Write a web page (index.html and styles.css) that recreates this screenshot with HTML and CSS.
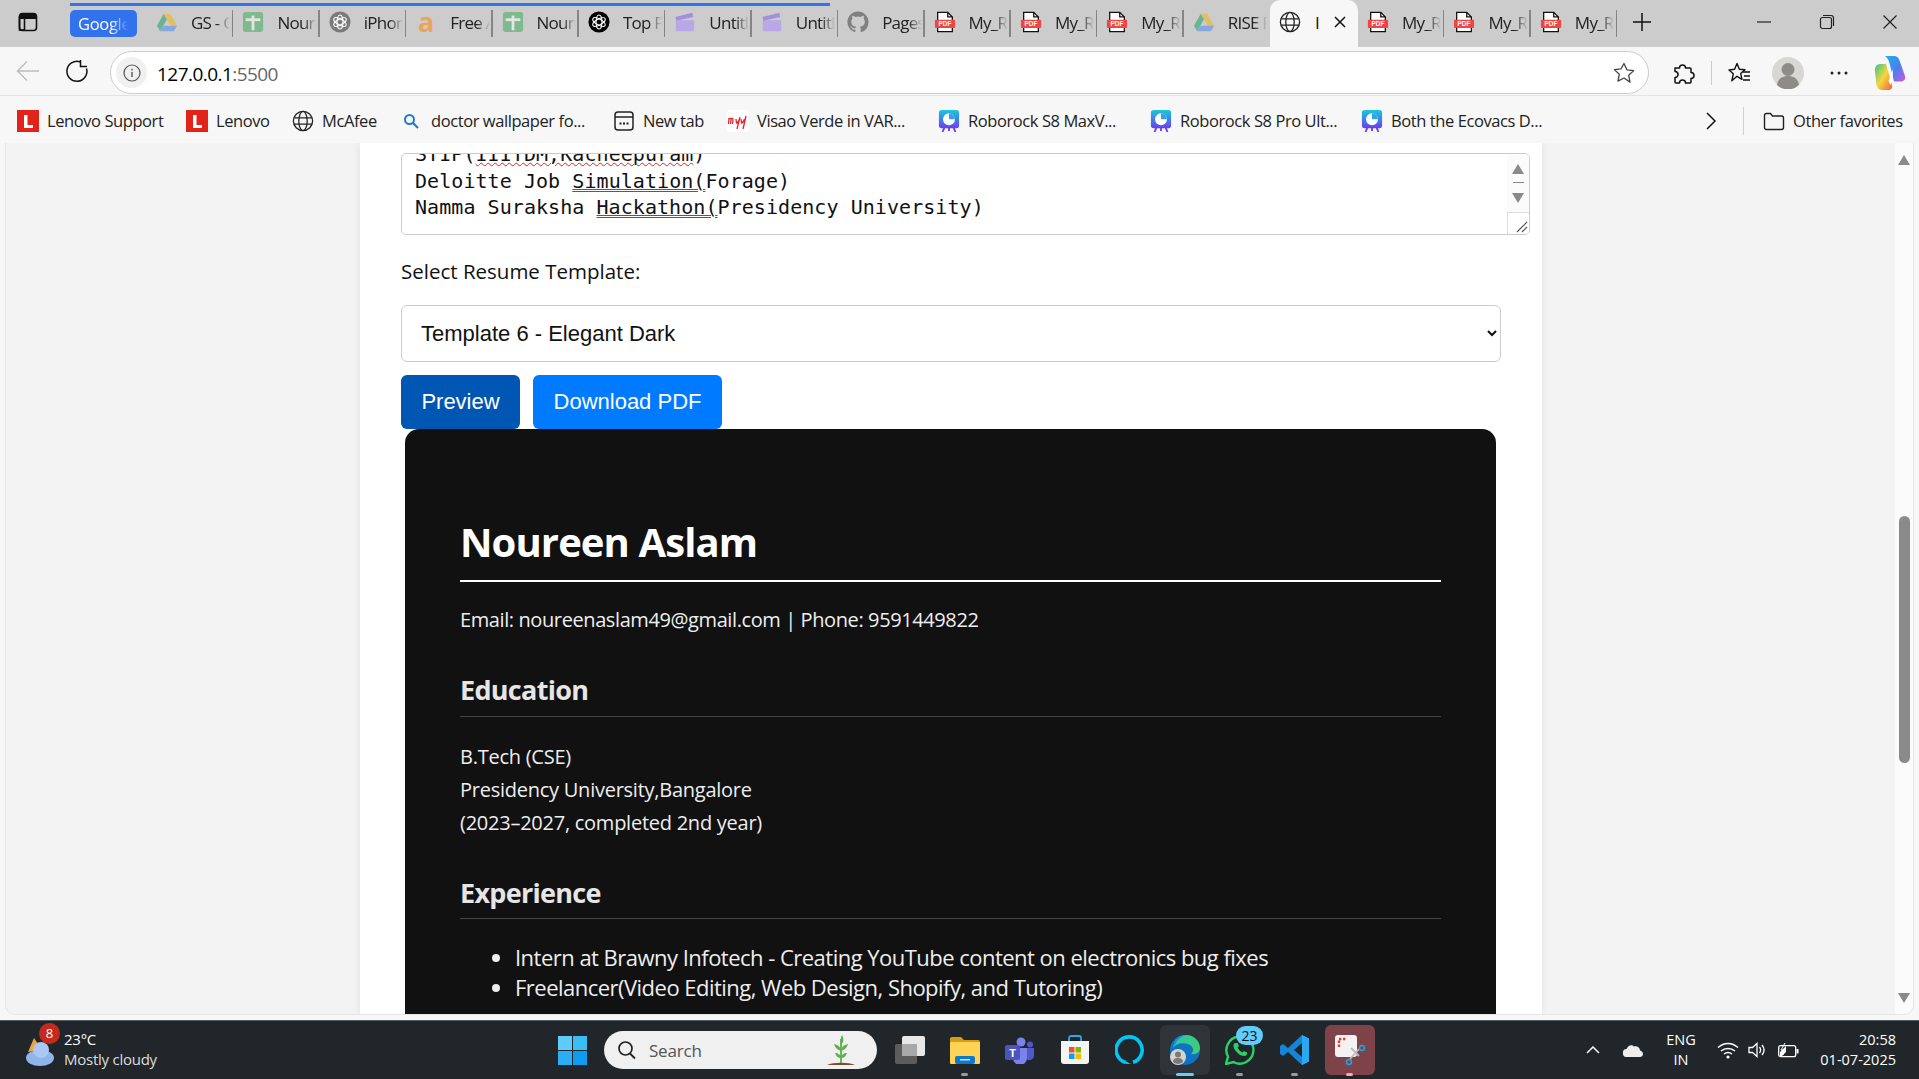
FILE: index.html
```html
<!DOCTYPE html>
<html>
<head>
<title>Resume Builder</title>
<link rel="stylesheet" href="styles.css">
</head>
<body>

<svg class="sprite" width="0" height="0">
<symbol id="i-drive" viewBox="0 0 24 24"><path fill="#0f9d58" d="M8.5 3 1 16l3.5 6 7.5-13z"/><path fill="#f5b400" d="M8.5 3h7L23 16h-7z"/><path fill="#4285f4" d="M4.5 22 8 16h15l-3.5 6z"/></symbol>
<symbol id="i-sheet" viewBox="0 0 24 24"><rect x="1" y="1" width="22" height="22" rx="3" fill="#34a853"/><rect x="10.5" y="5" width="3" height="16" fill="#fff"/><rect x="4" y="8" width="16" height="3" fill="#fff"/></symbol>
<symbol id="i-gpt" viewBox="0 0 24 24"><circle cx="12" cy="12" r="11.5" fill="currentColor"/><g fill="none" stroke="#fff" stroke-width="1.2"><ellipse cx="12" cy="12" rx="3.2" ry="7.6"/><ellipse cx="12" cy="12" rx="3.2" ry="7.6" transform="rotate(60 12 12)"/><ellipse cx="12" cy="12" rx="3.2" ry="7.6" transform="rotate(120 12 12)"/></g></symbol>
<symbol id="i-clap" viewBox="0 0 24 24"><path fill="#b9a7e8" d="M2 10h20v11a1 1 0 0 1-1 1H3a1 1 0 0 1-1-1z"/><path fill="#a48fdc" d="M1.5 6.5 20 2l1 4.5L2.5 10.5z"/></symbol>
<symbol id="i-pdf" viewBox="0 0 24 24"><path fill="#fff" stroke="#111" stroke-width="1.4" d="M4 1.5h11l5 5v16H4z"/><path fill="none" stroke="#111" stroke-width="1.4" d="M15 1.5v5h5"/><rect x="1" y="9.5" width="22" height="9" rx="1" fill="#f04545"/><text x="12" y="16.6" text-anchor="middle" class="pdf-text">PDF</text></symbol>
<symbol id="i-globe" viewBox="0 0 24 24"><g fill="none" stroke="#222" stroke-width="1.4"><circle cx="12" cy="12" r="10.5"/><ellipse cx="12" cy="12" rx="4.6" ry="10.5"/><path d="M2.2 8.5h19.6M2.2 15.5h19.6"/></g></symbol>
<symbol id="i-lenovo" viewBox="0 0 22 22"><rect width="22" height="22" fill="#e2231a"/><path fill="#fff" d="M7 5h3.5v10H16v3H7z"/></symbol>
<symbol id="i-robo" viewBox="0 0 24 24"><defs><linearGradient id="rb" x1="0" y1="0" x2="0" y2="1"><stop offset="0" stop-color="#19c8dc"/><stop offset="1" stop-color="#6a3df0"/></linearGradient></defs><rect x="1" y="0" width="22" height="20" rx="3" fill="url(#rb)"/><path d="M7 19l-2 5M17 19l2 5M12 19v4" stroke="#6a3df0" stroke-width="2"/><circle cx="12" cy="10" r="6.5" fill="#fff"/><path d="M12 10V3.5a6.5 6.5 0 0 1 6.5 6.5z" fill="#2ea6e6"/></symbol>
</svg>

<div class="tabbar">
  <div class="side-btn">
    <svg width="20" height="20" viewBox="0 0 20 20"><rect x="1.5" y="1.5" width="17" height="17" rx="3" fill="none" stroke="#111" stroke-width="1.6"/><path d="M1.5 5a3 3 0 0 1 3-3.5h11a3 3 0 0 1 3 3.5v2h-17z" fill="#111"/><rect x="1.5" y="5" width="5" height="13" fill="none" stroke="#111" stroke-width="1.6"/></svg>
  </div>
  <div class="group-chip"><span>Google</span></div>
  <div class="tab"><svg class="tab-icon dim"><use href="#i-drive"/></svg><span class="tab-text">GS - Goo</span></div>
  <div class="tab"><svg class="tab-icon dim"><use href="#i-sheet"/></svg><span class="tab-text">Nouree</span></div>
  <div class="tab tab-gpt"><svg class="tab-icon grey"><use href="#i-gpt"/></svg><span class="tab-text">iPhone</span></div>
  <div class="tab"><span class="tab-a">a</span><span class="tab-text">Free AI</span></div>
  <div class="tab"><svg class="tab-icon dim"><use href="#i-sheet"/></svg><span class="tab-text">Nouree</span></div>
  <div class="tab"><svg class="tab-icon black"><use href="#i-gpt"/></svg><span class="tab-text">Top Pic</span></div>
  <div class="tab"><svg class="tab-icon"><use href="#i-clap"/></svg><span class="tab-text">Untitled</span></div>
  <div class="tab"><svg class="tab-icon"><use href="#i-clap"/></svg><span class="tab-text">Untitled</span></div>
  <div class="tab"><svg class="tab-icon" viewBox="0 0 24 24"><path fill="#808080" d="M12 .5C5.65.5.5 5.65.5 12c0 5.08 3.29 9.39 7.86 10.91.57.1.78-.25.78-.55v-1.93c-3.2.7-3.87-1.54-3.87-1.54-.52-1.33-1.28-1.68-1.28-1.68-1.05-.72.08-.7.08-.7 1.16.08 1.77 1.19 1.77 1.19 1.03 1.76 2.7 1.25 3.36.96.1-.75.4-1.25.73-1.54-2.56-.29-5.25-1.28-5.25-5.69 0-1.26.45-2.28 1.19-3.09-.12-.29-.52-1.47.11-3.05 0 0 .97-.31 3.17 1.18a11 11 0 0 1 5.78 0c2.2-1.49 3.17-1.18 3.17-1.18.63 1.58.23 2.76.11 3.05.74.81 1.19 1.83 1.19 3.09 0 4.42-2.69 5.4-5.26 5.68.41.36.78 1.06.78 2.14v3.17c0 .31.21.66.79.55A11.5 11.5 0 0 0 23.5 12C23.5 5.65 18.35.5 12 .5z"/></svg><span class="tab-text">Pages</span></div>
  <div class="tab"><svg class="tab-icon"><use href="#i-pdf"/></svg><span class="tab-text">My_Res</span></div>
  <div class="tab"><svg class="tab-icon"><use href="#i-pdf"/></svg><span class="tab-text">My_Res</span></div>
  <div class="tab"><svg class="tab-icon"><use href="#i-pdf"/></svg><span class="tab-text">My_Res</span></div>
  <div class="tab tab-last"><svg class="tab-icon dim"><use href="#i-drive"/></svg><span class="tab-text">RISE Pr</span></div>
  <div class="tab-active">
    <svg class="tab-icon"><use href="#i-globe"/></svg><span class="active-text">I</span>
    <svg class="tab-x" width="14" height="14" viewBox="0 0 14 14"><path d="M2 2l10 10M12 2 2 12" stroke="#111" stroke-width="1.5"/></svg>
  </div>
  <div class="tab tab-next"><svg class="tab-icon"><use href="#i-pdf"/></svg><span class="tab-text">My_Res</span></div>
  <div class="tab"><svg class="tab-icon"><use href="#i-pdf"/></svg><span class="tab-text">My_Res</span></div>
  <div class="tab"><svg class="tab-icon"><use href="#i-pdf"/></svg><span class="tab-text">My_Res</span></div>
  <div class="new-tab"><svg width="20" height="20" viewBox="0 0 20 20"><path d="M10 1v18M1 10h18" stroke="#111" stroke-width="1.5"/></svg></div>
  <div class="win-controls">
    <svg width="16" height="16" viewBox="0 0 16 16"><path d="M1 8h14" stroke="#222" stroke-width="1.2"/></svg>
    <svg width="16" height="16" viewBox="0 0 16 16"><rect x="1.5" y="3.5" width="11" height="11" rx="2" fill="none" stroke="#222" stroke-width="1.2"/><path d="M4 1.5h8a2.5 2.5 0 0 1 2.5 2.5v8" fill="none" stroke="#222" stroke-width="1.2"/></svg>
    <svg width="16" height="16" viewBox="0 0 16 16"><path d="M1.5 1.5l13 13M14.5 1.5l-13 13" stroke="#222" stroke-width="1.2"/></svg>
  </div>
</div>

<div class="toolbar">
  <div class="nav-btn nav-back"><svg width="24" height="22" viewBox="0 0 24 22"><path d="M23 11H2M11 1.5 1.5 11l9.5 9.5" fill="none" stroke="#bdbdbd" stroke-width="1.5"/></svg></div>
  <div class="nav-btn nav-reload"><svg width="24" height="24" viewBox="0 0 24 24"><path d="M15 2.800A10 10 0 1 0 21.500 9.500M15.500 1v6.500H22" fill="none" stroke="#111" stroke-width="1.5"/></svg></div>
  <div class="address">
    <div class="site-info"><svg width="18" height="18" viewBox="0 0 18 18"><circle cx="9" cy="9" r="8" fill="none" stroke="#555" stroke-width="1.2"/><path d="M9 8v5M9 4.800v1.600" stroke="#555" stroke-width="1.4"/></svg></div>
    <span class="url">127.0.0.1<span class="url-port">:5500</span></span>
    <svg class="star" width="24" height="24" viewBox="0 0 24 24"><path d="M12 2.500l2.900 6.300 6.800.8-5 4.700 1.300 6.800L12 17l-6 3.100 1.300-6.800-5-4.700 6.800-.8z" fill="none" stroke="#444" stroke-width="1.3" stroke-linejoin="round"/></svg>
  </div>
  <div class="tool-icons">
    <svg class="t-ext" width="24" height="24" viewBox="0 0 24 24"><path d="M4 7h4.500a3 3 0 1 1 6 0H19a1 1 0 0 1 1 1v3.500a3 3 0 1 1 0 6V21a1 1 0 0 1-1 1h-4.500a3 3 0 1 0-6 0H5a1 1 0 0 1-1-1v-4.500a3 3 0 1 0 0-6z" fill="none" stroke="#111" stroke-width="1.5" stroke-linejoin="round"/></svg>
    <span class="t-sep"></span>
    <svg class="t-fav" width="24" height="24" viewBox="0 0 24 24"><path d="M10 2.500l2.400 5.800 5.600.5-4.300 3.800 1.300 5.700-5-3-5.200 4.500 1.500-7L2 9l5.600-.7z" fill="none" stroke="#111" stroke-width="1.4" stroke-linejoin="round"/><path d="M16 11h7M17 15h6M16 19h7" stroke="#111" stroke-width="1.3"/></svg>
    <span class="avatar"><svg width="32" height="32" viewBox="0 0 32 32"><circle cx="16" cy="16" r="16" fill="#d8d7d3"/><circle cx="16" cy="12.500" r="6.500" fill="#8e8c88"/><path d="M5 28c1-7 6-9 11-9s10 2 11 9a16 16 0 0 1-22 0z" fill="#8e8c88"/></svg></span>
    <svg class="t-dots" width="20" height="6" viewBox="0 0 20 6"><circle cx="3" cy="3" r="1.5" fill="#222"/><circle cx="10" cy="3" r="1.5" fill="#222"/><circle cx="17" cy="3" r="1.5" fill="#222"/></svg>
    <svg class="t-copilot" width="32" height="36" viewBox="0 0 32 36"><defs><linearGradient id="cp1" x1="0" y1="0" x2="1" y2="1"><stop offset="0" stop-color="#18b4e8"/><stop offset=".55" stop-color="#4f7cf0"/><stop offset="1" stop-color="#c85cdc"/></linearGradient><linearGradient id="cp2" x1="0" y1="0" x2="1" y2="1"><stop offset="0" stop-color="#35c48a"/><stop offset=".5" stop-color="#f6d63c"/><stop offset="1" stop-color="#f0603c"/></linearGradient></defs><path d="M11 1h9c3 0 4.500 1.500 5.500 4.500L31 21c1 3-1 5.500-4 5.500h-7L16 10c-1-4-2-7-5-9z" fill="url(#cp1)"/><path d="M6 9h6l6 21c.8 3-1 5-4 5H9c-4 0-5.500-2-6.500-5L1 17c-.5-4 1-8 5-8z" fill="url(#cp2)"/><path d="M14.500 26 19 14l-.5 12-2 4z" fill="#fff"/></svg>
  </div>
</div>

<div class="bookmarks">
  <div class="bm"><svg class="bm-icon"><use href="#i-lenovo"/></svg>Lenovo Support</div>
  <div class="bm"><svg class="bm-icon"><use href="#i-lenovo"/></svg>Lenovo</div>
  <div class="bm"><svg class="bm-icon"><use href="#i-globe"/></svg>McAfee</div>
  <div class="bm bm-search"><svg class="bm-mag" viewBox="0 0 16 16"><circle cx="6.500" cy="6.500" r="4.500" fill="none" stroke="#1f7ad0" stroke-width="2"/><path d="M10 10l5 5" stroke="#1f7ad0" stroke-width="2.2"/></svg>doctor wallpaper fo...</div>
  <div class="bm"><svg class="bm-icon" viewBox="0 0 22 22"><rect x="2" y="2" width="18" height="18" rx="3" fill="none" stroke="#222" stroke-width="1.5"/><path d="M2 7h18" stroke="#222" stroke-width="1.5"/><path d="M6.500 13.500h2M10 13.500h2M13.500 13.500h2" stroke="#222" stroke-width="1.8"/></svg>New tab</div>
  <div class="bm"><svg class="bm-icon" viewBox="0 0 22 22"><rect width="22" height="22" rx="3" fill="#fff"/><path d="M2 8l-.5 6M2 9c1-1 2-1 2 1l-.5 4M4 9c1-1 2-1 2 1l-.5 4M9 9l.5 4c1 0 2-1 3-4M13 7l-3 12M14 9l.5 4c1 0 2-1 3-4M19 6l-3 13" fill="none" stroke="#e8212b" stroke-width="1.3"/></svg>Visao Verde in VAR...</div>
  <div class="bm"><svg class="bm-icon"><use href="#i-robo"/></svg>Roborock S8 MaxV...</div>
  <div class="bm"><svg class="bm-icon"><use href="#i-robo"/></svg>Roborock S8 Pro Ult...</div>
  <div class="bm"><svg class="bm-icon"><use href="#i-robo"/></svg>Both the Ecovacs D...</div>
  <div class="bm-more"><svg width="12" height="20" viewBox="0 0 12 20"><path d="M2 2l8 8-8 8" fill="none" stroke="#111" stroke-width="1.5"/></svg></div>
  <div class="bm-other"><svg class="bm-icon" viewBox="0 0 22 22"><path d="M1.500 5.500a2 2 0 0 1 2-2h4l2 2.500h9a2 2 0 0 1 2 2v9.500a2 2 0 0 1-2 2h-15a2 2 0 0 1-2-2z" fill="none" stroke="#222" stroke-width="1.4"/></svg>Other favorites</div>
</div>

<div class="viewport">
  <div class="page-area">
    <div class="page">
      <div class="fake-textarea">
        <div class="ta-lines">
          <div>STIP(<span class="spell">IIITDM,Kacheepuram</span>)</div>
          <div>Deloitte Job <span class="grammar">Simulation(</span>Forage)</div>
          <div>Namma Suraksha <span class="grammar">Hackathon(</span>Presidency University)</div>
        </div>
        <div class="ta-scroll">
          <span class="tri-up"></span>
          <span class="ta-thumb"></span>
          <span class="tri-down"></span>
        </div>
        <div class="ta-grip"><svg width="12" height="12" viewBox="0 0 12 12"><path d="M1 11 11 1M6 11l5-5" stroke="#555" stroke-width="1.2"/></svg></div>
      </div>

      <label class="field-label">Select Resume Template:</label>
      <select class="template-select">
        <option>Template 6 - Elegant Dark</option>
      </select>

      <div class="btn-row">
        <button class="btn btn-preview">Preview</button>
        <button class="btn btn-download">Download PDF</button>
      </div>

      <div class="resume">
        <h1>Noureen Aslam</h1>
        <p class="contact">Email: noureenaslam49@gmail.com | Phone: 9591449822</p>
        <h2>Education</h2>
        <p class="edu">B.Tech (CSE)<br>Presidency University,Bangalore<br>(2023–2027, completed 2nd year)</p>
        <h2>Experience</h2>
        <ul>
          <li>Intern at Brawny Infotech - Creating YouTube content on electronics bug fixes</li>
          <li>Freelancer(Video Editing, Web Design, Shopify, and Tutoring)</li>
        </ul>
      </div>
    </div>
  </div>
  <div class="scrollbar">
    <span class="tri-up"></span>
    <span class="sb-thumb"></span>
    <span class="tri-down"></span>
  </div>
</div>

<div class="taskbar">
  <div class="weather">
    <span class="weather-icon">
      <svg width="32" height="36" viewBox="0 0 32 36"><path d="M4 20 10 6l8 12z" fill="#f2a23a"/><ellipse cx="16" cy="26" rx="14" ry="8" fill="#8fb6ea"/><circle cx="17" cy="18" r="8" fill="#a9c8f2"/></svg>
      <span class="weather-badge">8</span>
    </span>
    <div class="weather-text"><div>23°C</div><div class="weather-sub">Mostly cloudy</div></div>
  </div>
  <div class="task-cell">
    <svg width="29" height="29" viewBox="0 0 29 29"><rect width="14" height="14" fill="#5fcdfb"/><rect x="15" width="14" height="14" fill="#3bbdf6"/><rect y="15" width="14" height="14" fill="#2aaef5"/><rect x="15" y="15" width="14" height="14" fill="#0f9cf0"/></svg>
  </div>
  <div class="search-pill">
    <svg width="20" height="20" viewBox="0 0 20 20"><circle cx="8.500" cy="8.500" r="6.500" fill="none" stroke="#222" stroke-width="1.7"/><path d="M13 13.500l5 5" stroke="#222" stroke-width="1.8"/></svg>
    <span class="search-text">Search</span>
    <svg class="plant" width="32" height="34" viewBox="0 0 32 34"><path d="M2 32c6-3 22-3 28 0z" fill="#7a4d2e"/><path d="M16 30V6" stroke="#4c9a3a" stroke-width="1.5"/><path d="M16 12c-1-4 0-8 1-10 2 3 2 7-1 10zM16 18c-3-1-6-3-7-7 4 1 7 3 7 7zM16 18c3-1 6-3 7-7-4 1-7 3-7 7zM16 25c-3 0-5-2-6-5 3 0 6 2 6 5zM16 25c3 0 5-2 6-5-3 0-6 2-6 5z" fill="#5bb04a"/></svg>
  </div>
  <div class="task-cell">
    <svg width="30" height="28" viewBox="0 0 30 28"><rect x="0" y="8" width="22" height="20" rx="2" fill="#5c5c5c"/><rect x="7" y="0" width="23" height="20" rx="2" fill="#e8e8e8"/><rect x="7" y="8" width="15" height="12" fill="#a8a8a8"/></svg>
  </div>
  <div class="task-cell has-dot">
    <svg width="30" height="27" viewBox="0 0 30 27"><path d="M0 2a2 2 0 0 1 2-2h9l3 3h14a2 2 0 0 1 2 2v4H0z" fill="#d59e12"/><rect y="5" width="30" height="22" rx="1" fill="#ffd456"/><rect x="5" y="19" width="20" height="8" rx="2" fill="#0f78c8"/><rect x="10" y="22" width="10" height="1.5" fill="#bfe3fa"/></svg>
  </div>
  <div class="task-cell">
    <svg width="30" height="27" viewBox="0 0 30 27"><circle cx="16" cy="5" r="4.500" fill="#7b83eb"/><circle cx="25" cy="7.500" r="3" fill="#5059c9"/><path d="M20 11h9v8a5 5 0 0 1-9 2z" fill="#5059c9"/><path d="M8 11h14v10a6 6 0 0 1-14 0z" fill="#7b83eb"/><rect y="8" width="15" height="15" rx="2" fill="#4b53bc"/><text x="7.500" y="20" text-anchor="middle" class="teams-text">T</text></svg>
  </div>
  <div class="task-cell">
    <svg width="30" height="30" viewBox="0 0 30 30"><path d="M9 6V3a2 2 0 0 1 2-2h8a2 2 0 0 1 2 2v3" fill="none" stroke="#2aa8e8" stroke-width="1.8"/><path d="M1 6h28v20a3 3 0 0 1-3 3H4a3 3 0 0 1-3-3z" fill="#f4f4f4"/><rect x="9" y="12" width="5.500" height="5.500" fill="#f25022"/><rect x="15.500" y="12" width="5.500" height="5.500" fill="#7fba00"/><rect x="9" y="18.500" width="5.500" height="5.500" fill="#00a4ef"/><rect x="15.500" y="18.500" width="5.500" height="5.500" fill="#ffb900"/></svg>
  </div>
  <div class="task-cell">
    <svg width="30" height="30" viewBox="0 0 30 30"><path d="M11 27.500A13 13 0 1 1 18 27.300" fill="none" stroke="#00c5f5" stroke-width="3.6"/><path d="M10 26l6 3-5 0z" fill="#00c5f5"/></svg>
  </div>
  <div class="task-cell task-active has-dot dot-blue">
    <svg width="30" height="30" viewBox="0 0 30 30"><defs><linearGradient id="eg" x1="0" y1="0" x2="1" y2="1"><stop offset="0" stop-color="#2fc4a8"/><stop offset="1" stop-color="#41d06a"/></linearGradient></defs><circle cx="15" cy="15" r="15" fill="#0f73c4"/><path d="M3 13C4 5 10 0 16 0c8 0 14 6 14 13 0 4-4 7-9 6 3-2 3-7-1-9C14 7 6 8 3 13z" fill="url(#eg)"/><path d="M3 13C4 5 10 0 16 0c-5 2-9 5-10 8z" fill="#1d8fdc"/><circle cx="8" cy="22" r="8" fill="#d6d4d0"/><circle cx="8" cy="19.500" r="3" fill="#7c7a76"/><path d="M3 27c0-3 2-4 5-4s5 1 5 4a8 8 0 0 1-10 0z" fill="#7c7a76"/></svg>
  </div>
  <div class="task-cell has-dot">
    <svg width="30" height="30" viewBox="0 0 30 30"><path d="M1 29l2-7.500A13.500 13.500 0 1 1 8.500 27z" fill="none" stroke="#25d366" stroke-width="2.4"/><path d="M10 8c-2 1-2 4 0 7s6 6 9 6c2 0 4-2 3-3.500l-3-1.500-1.500 1.500c-2-.5-4-3-5-5l1.500-1.500L12.500 8z" fill="#25d366"/></svg>
    <span class="wa-badge">23</span>
  </div>
  <div class="task-cell has-dot">
    <svg width="30" height="30" viewBox="0 0 30 30"><path d="M22 0 29 3.500v23L22 30 8 17 3 21 0 19V11l3-2 5 4z" fill="#1685d8"/><path d="M22 8l-8 7 8 7z" fill="#20262a"/><path d="M22 0 29 3.500v23L22 30z" fill="#2aa8f0"/></svg>
  </div>
  <div class="task-cell task-snip has-dot dot-pink">
    <svg width="32" height="32" viewBox="0 0 32 32"><rect x="1" y="1" width="22" height="22" rx="3" fill="#f2f2f2"/><path d="M5 13V5h8" fill="none" stroke="#d8432e" stroke-width="2.4" stroke-dasharray="2.400 1.600"/><path d="M17 14l8 8M25 15l-9 10" stroke="#bbb" stroke-width="1.8"/><circle cx="28" cy="14" r="2.500" fill="none" stroke="#2aa0e0" stroke-width="1.5"/><circle cx="15" cy="28" r="2.500" fill="none" stroke="#2aa0e0" stroke-width="1.5"/></svg>
  </div>
  <div class="tray">
    <div class="tray-chev"><svg width="14" height="8" viewBox="0 0 14 8"><path d="M1 7l6-6 6 6" fill="none" stroke="#fff" stroke-width="1.5"/></svg></div>
    <div class="tray-cloud"><svg width="20" height="13" viewBox="0 0 20 13"><path d="M4 13a4 4 0 0 1-.5-8C5 1 9 0 11 2.500c3-1 6 1 6 4 2 .5 3 2 3 3.500 0 2-1.500 3-3 3z" fill="#eee"/></svg></div>
    <div class="tray-lang">ENG<br>IN</div>
    <div class="tray-wifi"><svg width="22" height="18" viewBox="0 0 22 18"><path d="M1 6.500c6-5.500 14-5.500 20 0M4 10c4-3.500 10-3.500 14 0M7 13c2.500-2 5.500-2 8 0" fill="none" stroke="#fff" stroke-width="1.5"/><circle cx="11" cy="16" r="1.6" fill="#fff"/></svg></div>
    <div class="tray-sound"><svg width="20" height="16" viewBox="0 0 20 16"><path d="M1 5.500h3.500L9 1.500v13l-4.500-4H1z" fill="none" stroke="#fff" stroke-width="1.3"/><path d="M11.500 5c1.500 2 1.500 4 0 6M14 3c2.500 3 2.500 7 0 10" fill="none" stroke="#fff" stroke-width="1.3"/></svg></div>
    <div class="tray-batt"><svg width="21" height="15" viewBox="0 0 21 15"><rect x=".7" y="2.700" width="17" height="11" rx="2" fill="none" stroke="#fff" stroke-width="1.3"/><rect x="18.500" y="6" width="2" height="4.500" fill="#fff"/><path d="M2 13V9l6-6v6l-4 4z" fill="#fff"/><path d="M7 0 3 7h3.500L5 12" fill="none" stroke="#fff" stroke-width="1"/></svg></div>
    <div class="tray-clock">20:58<br>01-07-2025</div>
  </div>
</div>

</body>
</html>
```

FILE: styles.css
```css
*{
box-sizing:border-box;
}

html,body{
height:100%;
}

body{
margin:0;
height:1079px;
overflow:hidden;
display:flex;
flex-direction:column;
background:#f7f7f7;
font-family:"Open Sans",sans-serif;
color:#111;
}

.sprite{
position:absolute;
}

.pdf-text{
font-family:"Liberation Sans",sans-serif;
font-size:7px;
font-weight:bold;
fill:#fff;
}

.teams-text{
font-family:"Liberation Sans",sans-serif;
font-size:11px;
font-weight:bold;
fill:#fff;
}

/* tab strip */

.tabbar{
height:47px;
flex:none;
display:flex;
align-items:stretch;
background:#ccc;
position:relative;
}

.tabbar::before{
content:"";
position:absolute;
left:70px;
top:3px;
width:760px;
height:3px;
background:#3272ec;
}

.side-btn{
width:70px;
padding:12px 0 0 18px;
}

.group-chip{
width:67px;
height:27px;
margin:10px 10px 0 0;
padding:2px 0 0 8px;
background:#3272ec;
border-radius:5px;
color:#fff;
font-size:16.5px;
letter-spacing:-.3px;
overflow:hidden;
white-space:nowrap;
}

.group-chip span{
display:block;
overflow:hidden;
-webkit-mask-image:linear-gradient(90deg,#000 55%,transparent 85%);
mask-image:linear-gradient(90deg,#000 55%,transparent 85%);
}

.tab{
width:86.4px;
flex:none;
display:flex;
align-items:center;
padding:0 3px 3px 9px;
position:relative;
overflow:hidden;
}

.tab::after{
content:"";
position:absolute;
right:0;
top:10px;
height:27px;
width:1.5px;
background:#858585;
}

.tab-last::after{
display:none;
}

.tab-icon{
width:22px;
height:22px;
flex:none;
}

.dim{
opacity:.5;
}

.grey{
color:#7b7b7b;
}

.black{
color:#000;
}

.tab-a{
width:22px;
flex:none;
font-size:27px;
font-weight:bold;
line-height:22px;
color:#e9a65a;
text-align:center;
}

.tab-text{
margin-left:13px;
font-size:17px;
letter-spacing:-.75px;
white-space:nowrap;
overflow:hidden;
flex:1;
color:#222;
-webkit-mask-image:linear-gradient(90deg,#000 65%,transparent 100%);
mask-image:linear-gradient(90deg,#000 65%,transparent 100%);
}

.tab-active{
width:88px;
flex:none;
display:flex;
align-items:center;
padding:0 0 3px 9px;
background:#f7f7f7;
border-radius:10px 10px 0 0;
}

.active-text{
margin-left:14px;
font-size:17px;
}

.tab-x{
margin-left:13px;
}

.new-tab{
width:50px;
padding:12px 0 0 15px;
}

.win-controls{
margin-left:auto;
display:flex;
align-items:center;
gap:47px;
padding:0 21px 3px 0;
}

/* toolbar */

.toolbar{
height:49px;
flex:none;
display:flex;
align-items:center;
background:#f7f7f7;
border-bottom:1px solid #e3e3e3;
}

.nav-btn{
display:flex;
align-items:center;
justify-content:center;
}

.nav-back{
width:54px;
padding-left:1px;
}

.nav-reload{
width:46px;
}

.address{
margin-left:10px;
width:1539px;
height:43px;
margin-top:3px;
background:#fff;
border:1px solid #ccc;
border-radius:22px;
display:flex;
align-items:center;
padding:0 12px 0 5px;
}

.site-info{
width:31px;
height:31px;
border-radius:50%;
background:#f0f0f0;
display:flex;
align-items:center;
justify-content:center;
}

.url{
margin:2px 0 0 10px;
font-size:19px;
letter-spacing:-.55px;
color:#000;
}

.url-port{
color:#666;
}

.star{
margin-left:auto;
}

.tool-icons{
flex:1;
display:flex;
align-items:center;
padding-top:3px;
}

.t-ext{
margin-left:22px;
}

.t-sep{
width:1px;
height:24px;
margin-left:16px;
background:#ccc;
}

.t-fav{
margin-left:15px;
}

.avatar{
margin-left:21px;
height:32px;
}

.t-dots{
margin-left:25px;
}

.t-copilot{
margin-left:25px;
}

/* bookmarks */

.bookmarks{
height:47px;
flex:none;
display:grid;
grid-template-columns:169px 106px 111px 210px 114px 211px 212px 211px 344px 38px 1fr;
align-items:center;
padding:2px 0 0 17px;
font-size:16.5px;
letter-spacing:-.42px;
color:#222;
}

.bm,.bm-other{
display:flex;
align-items:center;
gap:8px;
white-space:nowrap;
}

.bm-icon{
width:22px;
height:22px;
flex:none;
}

.bm-mag{
width:16px;
height:16px;
margin-right:4px;
}

.bm-more{
display:flex;
justify-content:flex-start;
}

.bm-other{
border-left:1px solid #d0d0d0;
height:28px;
padding-left:19px;
}

/* browser page */

.viewport{
flex:1;
display:flex;
min-height:0;
margin:0 5px 5px 5px;
background:#f3f3f3;
border:1px solid #e6e6e6;
border-top:none;
border-radius:0 0 10px 10px;
overflow:hidden;
}

.page-area{
flex:1;
padding-left:354px;
overflow:hidden;
}

.page{
width:1182px;
height:100%;
padding:10px 12px 0 41px;
background:#fff;
box-shadow:0 0 8px rgba(0,0,0,.08);
overflow:hidden;
}

.fake-textarea{
width:1129px;
height:82px;
border:1px solid #ccc;
border-radius:5px;
display:flex;
position:relative;
overflow:hidden;
font-family:"DejaVu Sans Mono",monospace;
font-size:20px;
letter-spacing:.06px;
line-height:26.5px;
}

.ta-lines{
flex:1;
padding-left:13px;
margin-top:-13px;
white-space:nowrap;
}

.spell{
text-decoration:underline wavy #e0241c 1px;
}

.grammar{
text-decoration:underline double #3a55cc 1px;
}

.ta-scroll{
width:22px;
height:60px;
background:#fbfbfb;
display:flex;
flex-direction:column;
align-items:center;
padding-top:10px;
}

.tri-up{
width:0;
height:0;
border-left:6px solid transparent;
border-right:6px solid transparent;
border-bottom:10px solid #8a8a8a;
}

.tri-down{
width:0;
height:0;
border-left:6px solid transparent;
border-right:6px solid transparent;
border-top:10px solid #8a8a8a;
}

.ta-thumb{
width:11px;
height:1px;
margin:8px 0 10px;
background:#8a8a8a;
}

.ta-grip{
position:absolute;
right:0;
bottom:0;
width:22px;
height:22px;
background:#fff;
border:1px solid #ddd;
border-right:none;
border-bottom:none;
padding:8px 0 0 8px;
line-height:0;
}

.field-label{
display:block;
margin-top:20px;
font-size:20.5px;
line-height:32px;
color:#111;
}

.template-select{
display:block;
width:1100px;
height:57px;
margin-top:18px;
padding:0 15px;
font-family:"Liberation Sans",sans-serif;
font-size:22px;
background:#fff;
color:#111;
border:1px solid #ccc;
border-radius:6px;
}

.btn-row{
display:flex;
gap:13px;
margin-top:13px;
}

.btn{
height:54px;
border:none;
border-radius:6px;
color:#fff;
font-family:"Liberation Sans",sans-serif;
font-size:22px;
padding:0 20px;
}

.btn-preview{
width:119px;
background:#0056b3;
}

.btn-download{
width:189px;
background:#007bff;
}

/* resume card */

.resume{
width:1091px;
min-height:640px;
margin-left:4px;
padding:88px 55px 40px;
background:#111;
color:#eee;
border-radius:14px 14px 0 0;
font-size:20px;
letter-spacing:-.4px;
}

.resume h1{
margin:0;
padding-bottom:13px;
font-size:40px;
font-weight:700;
line-height:50px;
letter-spacing:-.9px;
color:#fff;
border-bottom:2.5px solid #fff;
}

.contact{
margin:22px 0 0;
line-height:32px;
}

.resume h2{
margin:36px 0 0;
padding-bottom:8px;
font-size:27px;
font-weight:700;
line-height:36px;
letter-spacing:-.7px;
color:#e6e6e6;
border-bottom:1px solid #444;
}

.edu{
margin:23px 0 0;
line-height:33px;
letter-spacing:-.25px;
}

.edu + h2{
margin-top:36px;
padding-bottom:7px;
}

.resume ul{
margin:23px 0 0;
padding-left:55px;
font-size:22px;
line-height:30px;
letter-spacing:-.52px;
}

/* page scrollbar */

.scrollbar{
width:18px;
flex:none;
background:#fbfbfb;
display:flex;
flex-direction:column;
align-items:center;
padding-top:12px;
}

.sb-thumb{
width:11px;
height:247px;
margin-top:351px;
background:#8a8a8a;
border-radius:6px;
}

.scrollbar .tri-down{
margin-top:auto;
margin-bottom:11px;
}

/* windows taskbar */

.taskbar{
height:59px;
flex:none;
display:flex;
align-items:center;
background:#20262a;
border-top:1px solid #555a5e;
color:#fff;
}

.weather{
width:545px;
flex:none;
display:flex;
align-items:center;
padding-left:24px;
}

.weather-icon{
position:relative;
width:32px;
height:36px;
}

.weather-badge{
position:absolute;
left:15px;
top:-9px;
width:21px;
height:21px;
border-radius:50%;
background:#c42b1c;
text-align:center;
font-size:13px;
line-height:21px;
}

.weather-text{
margin:-2px 0 0 8px;
font-size:15px;
letter-spacing:-.25px;
line-height:20px;
}

.weather-sub{
color:#ddd;
}

.task-cell{
width:55px;
height:50px;
flex:none;
display:flex;
align-items:center;
justify-content:center;
position:relative;
border-radius:6px;
}

.search-pill{
width:273px;
height:38px;
margin:0 5px 0 4px;
flex:none;
display:flex;
align-items:center;
padding-left:13px;
background:#f0f0f0;
border-radius:19px;
color:#555;
}

.search-text{
margin-left:12px;
font-size:17px;
letter-spacing:-.2px;
}

.plant{
margin-left:auto;
margin-right:20px;
}

.task-active{
background:#2e3438;
width:50px;
margin:0 2.5px;
}

.task-snip{
background:#7d4348;
width:50px;
margin:0 2.5px;
}

.has-dot::after{
content:"";
position:absolute;
left:50%;
bottom:-1px;
width:7px;
height:3px;
margin-left:-3.5px;
border-radius:2px;
background:#9a9a9a;
}

.dot-blue::after{
width:18px;
margin-left:-9px;
background:#60cdff;
}

.dot-pink::after{
background:#f7a8b0;
}

.wa-badge{
position:absolute;
left:24px;
top:1px;
width:27px;
height:19px;
border-radius:10px;
background:#60cdff;
color:#111;
text-align:center;
font-size:14px;
line-height:19px;
}

.tray{
margin-left:auto;
display:flex;
align-items:center;
padding-right:23px;
font-size:14.5px;
line-height:20px;
}

.tray-chev,.tray-cloud,.tray-wifi,.tray-sound,.tray-batt{
display:flex;
align-items:center;
justify-content:center;
}

.tray-chev{
width:40px;
}

.tray-cloud{
width:40px;
}

.tray-lang{
width:58px;
padding-right:2px;
text-align:center;
}

.tray-wifi{
width:34px;
}

.tray-sound{
width:25px;
}

.tray-batt{
width:36px;
}

.tray-clock{
width:90px;
text-align:right;
}
```
